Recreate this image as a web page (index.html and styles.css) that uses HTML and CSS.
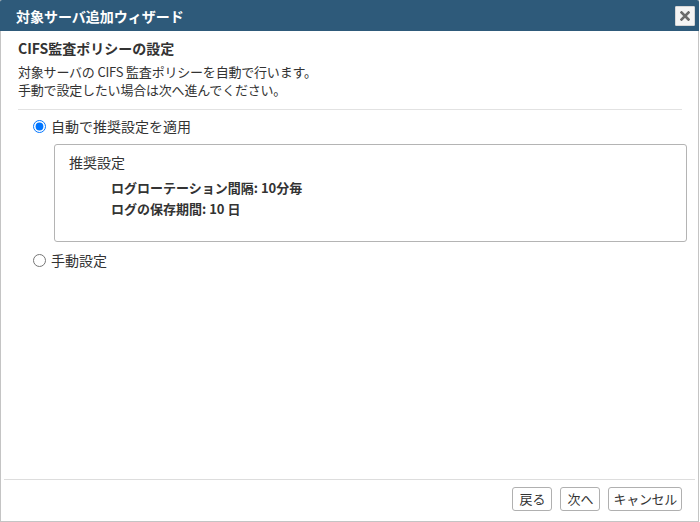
FILE: index.html
```html
<!DOCTYPE html>
<html lang="ja">
<head>
<meta charset="utf-8">
<title>対象サーバ追加ウィザード</title>
<link rel="stylesheet" href="styles.css">
</head>
<body>
<div class="dialog">
  <div class="titlebar">
    <span class="title">対象サーバ追加ウィザード</span>
    <button class="close" type="button" aria-label="close">
      <svg width="10" height="10" viewBox="0 0 10 10"><path d="M1.5 1.5 L8.5 8.5 M8.5 1.5 L1.5 8.5" stroke="#6b6b6b" stroke-width="2.6" stroke-linecap="square"/></svg>
    </button>
  </div>
  <div class="body">
    <h1 class="heading">CIFS監査ポリシーの設定</h1>
    <p class="desc">対象サーバの CIFS 監査ポリシーを自動で行います。<br>手動で設定したい場合は次へ進んでください。</p>
    <div class="sep"></div>
    <label class="option first"><input type="radio" name="mode" checked><span>自動で推奨設定を適用</span></label>
    <div class="box">
      <div class="box-title">推奨設定</div>
      <div class="settings">
        <div>ログローテーション間隔: 10分毎</div>
        <div>ログの保存期間: 10 日</div>
      </div>
    </div>
    <label class="option second"><input type="radio" name="mode"><span>手動設定</span></label>
  </div>
  <div class="footer">
    <button class="btn" type="button">戻る</button>
    <button class="btn" type="button">次へ</button>
    <button class="btn btn-wide" type="button">キャンセル</button>
  </div>
</div>
</body>
</html>
```
FILE: styles.css
```css
html, body {
  margin: 0;
  padding: 0;
  background: #ffffff;
}
body {
  font-family: "Noto Sans CJK JP", "Noto Sans", sans-serif;
  color: #333333;
  font-size: 13px;
}
.dialog {
  width: 699px;
  height: 522px;
  box-sizing: border-box;
  border: 1px solid #c4c4c4;
  border-top: none;
  display: flex;
  flex-direction: column;
  background: #ffffff;
}
.titlebar {
  height: 31px;
  margin: 0 -1px 0 -1px;
  background: #2e5a7a;
  display: flex;
  align-items: center;
  justify-content: space-between;
  padding: 0 4px 0 16px;
  border-top-left-radius: 2px;
  border-top-right-radius: 2px;
}
.title {
  color: #ffffff;
  font-weight: bold;
  font-size: 14px;
  line-height: 20px;
}
.close {
  width: 20px;
  height: 20px;
  padding: 0;
  margin: 0;
  border: 1px solid #d6d6d6;
  background: #f4f4f4;
  display: flex;
  align-items: center;
  justify-content: center;
  border-radius: 1px;
}
.close svg { display: block; }
.body {
  flex: 1;
  padding: 0 16px 0 17px;
}
.heading {
  margin: 7px 0 0 0;
  font-size: 14px;
  font-weight: bold;
  line-height: 20px;
  color: #333333;
}
.desc {
  margin: 5px 0 0 0;
  font-size: 13px;
  line-height: 18px;
  letter-spacing: -0.2px;
}
.sep {
  margin-top: 10px;
  border-top: 1px solid #e2e2e2;
}
.option {
  display: flex;
  align-items: center;
  height: 20px;
  padding-left: 15px;
  font-size: 14px;
  line-height: 20px;
}
.option input {
  margin: 0 5px 0 0;
  width: 13px;
  height: 13px;
}
.option.first { margin-top: 6px; }
.option.second { margin-top: 8px; }
.box {
  margin: 8px -5px 0 36px;
  height: 98px;
  box-sizing: border-box;
  border: 1px solid #b4b4b4;
  border-radius: 3px;
  padding: 7px 14px 0 14px;
}
.box-title {
  font-size: 14px;
  line-height: 20px;
}
.settings {
  margin-top: 5px;
  padding-left: 42px;
  font-weight: bold;
  font-size: 13px;
  line-height: 21px;
  color: #333333;
}
.footer {
  margin: 0 3px;
  border-top: 1px solid #dddddd;
  padding: 7px 13px 10px 0;
  display: flex;
  justify-content: flex-end;
  gap: 8px;
}
.btn {
  height: 24px;
  min-width: 38px;
  padding: 0 6px;
  font-family: "Noto Sans CJK JP", "Noto Sans", sans-serif;
  font-size: 13px;
  color: #333333;
  background: #ffffff;
  border: 1px solid #b0b0b0;
  border-radius: 3px;
  line-height: 20px;
}
.btn-wide {
  padding: 0 4px;
  letter-spacing: -0.3px;
}
```
